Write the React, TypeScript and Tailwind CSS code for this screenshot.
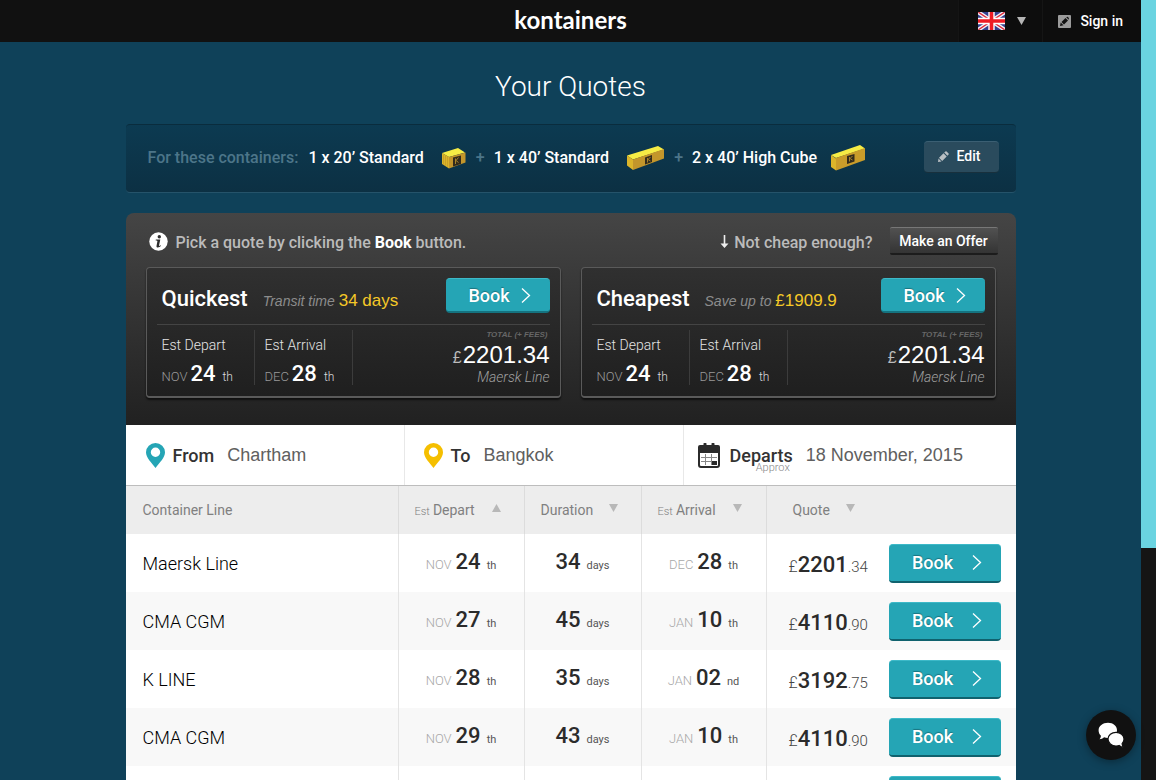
import React from "react";

type Line = {
  name: string;
  depart: [string, string, string];
  days: string;
  arrive: [string, string, string];
  price: [string, string];
};

const lines: Line[] = [
  { name: "Maersk Line", depart: ["NOV", "24", "th"], days: "34", arrive: ["DEC", "28", "th"], price: ["2201", ".34"] },
  { name: "CMA CGM", depart: ["NOV", "27", "th"], days: "45", arrive: ["JAN", "10", "th"], price: ["4110", ".90"] },
  { name: "K LINE", depart: ["NOV", "28", "th"], days: "35", arrive: ["JAN", "02", "nd"], price: ["3192", ".75"] },
  { name: "CMA CGM", depart: ["NOV", "29", "th"], days: "43", arrive: ["JAN", "10", "th"], price: ["4110", ".90"] },
  { name: "Maersk Line", depart: ["DEC", "01", "st"], days: "34", arrive: ["JAN", "04", "th"], price: ["4201", ".34"] },
];

function Chevron() {
  return (
    <svg width="10" height="17" viewBox="0 0 10 17" fill="none" stroke="currentColor" strokeWidth="1.3" aria-hidden="true">
      <path d="M1 1.5 8.5 8.5 1 15.5" />
    </svg>
  );
}

function Flag() {
  return (
    <svg width="27" height="18" viewBox="0 0 27 18" aria-hidden="true">
      <clipPath id="flag-clip">
        <rect width="27" height="18" rx="1" />
      </clipPath>
      <g clipPath="url(#flag-clip)">
        <rect width="27" height="18" fill="#34408f" />
        <path d="M0 0 27 18M27 0 0 18" stroke="#f3f1f5" strokeWidth="4" />
        <path d="M0 0 27 18M27 0 0 18" stroke="#e0283a" strokeWidth="1.4" />
        <path d="M13.5 0V18M0 9H27" stroke="#fff" strokeWidth="6.4" />
        <path d="M13.5 0V18M0 9H27" stroke="#ee1c25" strokeWidth="3.6" />
      </g>
    </svg>
  );
}

function Triangle({ up = false }: { up?: boolean }) {
  return (
    <svg width="9" height="8" viewBox="0 0 9 8" fill="currentColor" aria-hidden="true">
      <path d={up ? "M4.5 0 9 8H0z" : "M0 0H9L4.5 8z"} />
    </svg>
  );
}

function SmallBox() {
  return (
    <svg width="26" height="22" viewBox="0 0 26 22" aria-hidden="true">
      <path d="M1 6 17 1l7 4.500L8 10z" fill="#f6ec45" />
      <path d="M1 6 8 10V21.500L1 17z" fill="#dcb52a" />
      <path d="M8 10 24.500 5.500V15.500L8 21.500z" fill="#c3962b" />
      <path d="M2.500 7.500v10M4.500 8.500v10M6.500 9.500v10" stroke="#b68c22" strokeWidth=".5" />
      <path d="M12 10.500 20 8.500v8.500l-8 2.500z" fill="#332b1c" />
      <path d="M14.500 11.500v5.500M17.500 10.500l-2.500 3 2.500 2" stroke="#a8842b" fill="none" />
    </svg>
  );
}

function LongBox({ tall = false }: { tall?: boolean }) {
  return tall ? (
    <svg width="36" height="27" viewBox="0 0 36 27" aria-hidden="true">
      <path d="M1 11 30 1l5 3.500L6 14z" fill="#f6ec45" />
      <path d="M1 11 6 14.500V26.500L1 23z" fill="#dcb52a" />
      <path d="M6 14 35 4V16L6 26.500z" fill="#c99c2a" />
      <path d="M17 12 24.500 10v7.500L17 20z" fill="#332b1c" />
      <path d="M19.500 13v4.500M22.500 12l-2.500 2.500 2.500 1.500" stroke="#a8842b" fill="none" />
    </svg>
  ) : (
    <svg width="39" height="26" viewBox="0 0 39 26" aria-hidden="true">
      <path d="M1 10.500 32 1l6 3.500L7 14.500z" fill="#f6ec45" />
      <path d="M1 10.500 7 14.500V25L1 20.500z" fill="#dcb52a" />
      <path d="M7 14.500 38 4V13.500L7 25z" fill="#c3962b" />
      <path d="M19 12.500 26 10v7l-7 2.500z" fill="#332b1c" />
      <path d="M21.500 13v4.500M24.500 12l-2.500 2.500 2.500 1.500" stroke="#a8842b" fill="none" />
    </svg>
  );
}

function Pin({ color }: { color: string }) {
  return (
    <svg width="19" height="25" viewBox="0 0 19 25" aria-hidden="true">
      <path fillRule="evenodd" fill={color} d="M9.500 0A9.500 9.300 0 0 1 19 9.300C19 15 13.500 19.500 9.500 25 5.500 19.500 0 15 0 9.300A9.500 9.300 0 0 1 9.500 0zM9.500 4.500a4.700 4.700 0 1 0 0 9.400 4.700 4.700 0 0 0 0-9.400z" />
    </svg>
  );
}

function Calendar() {
  return (
    <svg width="22" height="25" viewBox="0 0 22 25" aria-hidden="true">
      <path fill="#2b2b2b" d="M2 2h3.500V1a1 1 0 0 1 3 0v1h5V1a1 1 0 0 1 3 0v1H20a2 2 0 0 1 2 2v18a3 3 0 0 1-3 3H3a3 3 0 0 1-3-3V4a2 2 0 0 1 2-2z" />
      <path fill="#fff" d="M2 10h18v12a1 1 0 0 1-1 1H3a1 1 0 0 1-1-1z" />
      <path stroke="#888" d="M3 14.500H19M3 18.500H19M7.500 11V22M13.500 11V22" />
      <path fill="#2b2b2b" d="M14 18h5v4h-5z" />
    </svg>
  );
}

function InfoIcon() {
  return (
    <svg width="19" height="19" viewBox="0 0 19 19" aria-hidden="true">
      <circle cx="9.500" cy="9.500" r="9.200" fill="#fff" />
      <circle cx="10.300" cy="4.700" r="1.700" fill="#2e2e2e" />
      <path d="M6.800 7.500h4.500l-1.300 6c-.1.700.5.700 1.500-.2l.5.500c-1.600 2-4.800 2.500-4.500.2l.9-4.800c.1-.6-.3-.8-1.700-.8z" fill="#2e2e2e" />
    </svg>
  );
}

function CardDate({ label, month, day, className }: { label: string; month: string; day: string; className: string }) {
  return (
    <div className={className}>
      <p className="pt-[5px] text-[14px] leading-[20px] font-light text-[#e4e4e4]">{label}</p>
      <p className="mt-[8px] text-[22px] leading-[22px] font-medium text-white">
        <span className="mr-[3px] text-[13px] leading-none font-light text-[#999]">{month}</span>
        {day}
        <span className="ml-[7px] text-[12px] leading-none font-light text-[#ddd]">th</span>
      </p>
    </div>
  );
}

function QuoteCard({ title, note, value }: { title: string; note: string; value: string }) {
  return (
    <section className="flex-1 rounded border border-b-2 border-[#5a5a5a] bg-linear-to-b from-[#303030] to-[#1f1f1f] px-[10px] pt-[10px] pb-[11px] shadow-[0_2px_2px_rgba(0,0,0,0.6)]">
      <div className="flex items-start justify-between border-b border-[#444] pb-[11px] pl-[5px]">
        <div className="flex items-baseline pt-[6px]">
          <h2 className="text-[22px] leading-[29px] font-medium text-white">{title}</h2>
          <p className="ml-[15px] font-['Liberation_Sans',sans-serif] text-[14px] leading-[20px] text-[#8c8c8c] italic">
            {note} <span className="text-[17px] leading-none text-[#f5c827] not-italic">{value}</span>
          </p>
        </div>
        <button className="flex h-[35px] w-[104px] items-center justify-center gap-[11px] rounded border-t border-b-2 border-t-[#3db9c8] border-b-[#157380] bg-[#25a5b5] pl-[4px] text-[18px] font-medium text-white text-shadow-[0_-1px_1px_rgba(0,0,0,0.3)]">
          Book <Chevron />
        </button>
      </div>
      <div className="flex justify-between pt-[5px] pl-[5px]">
        <div className="flex">
          <CardDate label="Est Depart" month="NOV" day="24" className="w-[93px] border-r border-[#3c3c3c]" />
          <CardDate label="Est Arrival" month="DEC" day="28" className="w-[98px] border-r border-[#3c3c3c] pl-[10px]" />
        </div>
        <div className="text-right">
          <p className="pr-[2px] font-['Liberation_Sans',sans-serif] text-[8px] leading-[10px] font-bold text-[#666] italic">TOTAL (+ FEES)</p>
          <p className="font-['Liberation_Sans',sans-serif] text-[24px] leading-[30px] text-white">
            <span className="mr-[1px] text-[16px] leading-none text-[#bbb]">£</span>2201.34
          </p>
          <p className="text-[14px] leading-[14px] font-light text-[#a0a0a0] italic">Maersk Line</p>
        </div>
      </div>
    </section>
  );
}

function DateValue({ value }: { value: [string, string, string] }) {
  return (
    <>
      <span className="text-[13px] font-light text-[#a8a8a8]">{value[0]}</span>{" "}
      <b className="text-[22px] font-medium text-[#2b2b2b]">{value[1]}</b>
      <span className="ml-[6px] text-[11px] text-[#555]">{value[2]}</span>
    </>
  );
}

function SortHeader({ label, prefix, up, className }: { label: string; prefix?: string; up?: boolean; className: string }) {
  return (
    <th scope="col" className="border-l border-[#dcdcdc] p-0 font-normal">
      <button className={className}>
        <span>
          {prefix && <span className="mr-[3px] text-[11px] font-light">{prefix}</span>}
          {label}
        </span>
        <span className="pb-[4px] text-[#b8b8b8]">
          <Triangle up={up} />
        </span>
      </button>
    </th>
  );
}

export default function App() {
  return (
    <div className="flex h-screen bg-[#0f4159] font-[Roboto,sans-serif] antialiased">
      <div className="min-w-0 flex-1 overflow-y-auto [scrollbar-width:none]">
        <header className="grid h-[42px] grid-cols-[1fr_auto_1fr] bg-[#111]">
          <span />
          <a href="#" className="font-[Lato,sans-serif] text-[24px] leading-[39px] font-bold text-white">kontainers</a>
          <div className="flex justify-self-end bg-[#0d0d0d]">
            <button aria-label="Language" className="flex items-center gap-[12px] border-r border-l border-[#151515] pr-[16px] pl-[19px] text-[#b5b5b5]">
              <Flag />
              <Triangle />
            </button>
            <a href="#" className="flex items-center gap-[9px] pr-[18px] pl-[15px] text-[14px] font-medium text-white">
              <svg width="13" height="13" viewBox="0 0 13 13" aria-hidden="true">
                <rect width="13" height="13" rx="1" fill="#9b9b9b" />
                <path d="M2 11 2.700 7.500 5.500 10.300zM3.500 7 7.500 3l2.500 2.500-4 4zM8.200 2.300Q9.200 1.200 10.300 2.200T10.700 4.800z" fill="#111" />
              </svg>
              Sign in
            </a>
          </div>
        </header>

        <main className="mx-auto w-full max-w-[890px]">
          <h1 className="pt-[25px] text-center text-[28px] leading-[40px] font-light text-white">Your Quotes</h1>

          <section className="mt-[17px] flex h-[69px] items-center justify-between rounded border-t border-b border-t-[#0a2c3d] border-b-[#25536a] bg-linear-to-b from-[#0c3a51] to-[#0c3043] pr-[17px] pb-[2px] pl-[22px] text-[16px] font-medium text-white">
            <div className="flex items-center">
              <span className="mr-[10px] text-[#4c7589]">For these containers:</span>
              <span className="mr-[17px]">1 x 20’ Standard</span>
              <SmallBox />
              <span className="mx-[9px] text-[#4c7589]">+</span>
              <span className="mr-[17px]">1 x 40’ Standard</span>
              <LongBox />
              <span className="mx-[9px] text-[#4c7589]">+</span>
              <span className="mr-[13px]">2 x 40’ High Cube</span>
              <LongBox tall />
            </div>
            <button className="mb-[2px] flex h-[32px] w-[75px] items-center justify-center gap-[8px] rounded border-t border-b border-t-[#3b5f73] border-b-[#18303d] bg-[#2a4b5d] pr-[4px] text-[14px] font-medium">
              <svg width="11" height="11" viewBox="0 0 11 11" fill="#b9bfc3" aria-hidden="true">
                <path d="M0 11 .5 7.500 3.500 10.500zM1 6.800 5.500 2.300 8.700 5.500 4.200 10zM6.200 1.600 7.400.4Q8 0 8.600.4L10.600 2.400Q11 3 10.600 3.600L9.400 4.800z" />
              </svg>
              Edit
            </button>
          </section>

          <section className="mt-[20px] rounded-t-lg bg-linear-to-b from-[#454545] to-[#212121] px-[20px] pt-[14px] pb-[27px]">
            <div className="mb-[12px] flex items-center justify-between text-[16px] font-medium text-[#bbb]">
              <p className="flex items-center gap-[8px] pl-[3px]">
                <InfoIcon />
                <span className="pt-[3px]">
                  Pick a quote by clicking the <b className="font-bold text-white">Book</b> button.
                </span>
              </p>
              <div className="-mr-[2px] flex items-center">
                <svg width="9" height="13" viewBox="0 0 9 13" fill="#eee" aria-hidden="true">
                  <path d="M3.700 0h1.600v8.500H8.500L4.500 13 .5 8.500h3.200z" />
                </svg>
                <span className="mr-[17px] ml-[5px] pt-[3px]">Not cheap enough?</span>
                <button className="h-[28px] w-[108px] rounded-xs border-t border-b-2 border-t-[#777] border-b-[#1c1c1c] bg-linear-to-b from-[#515151] to-[#343434] pt-[1px] text-[14px] font-medium text-white">
                  Make an Offer
                </button>
              </div>
            </div>
            <div className="flex gap-[20px]">
              <QuoteCard title="Quickest" note="Transit time" value="34 days" />
              <QuoteCard title="Cheapest" note="Save up to" value="£1909.9" />
            </div>
          </section>

          <section className="flex h-[61px] items-center border-b border-[#bdbdbd] bg-white text-[18px] text-[#333]">
            <div className="flex h-full w-[278px] items-center pl-[20px]">
              <Pin color="#25a5b5" />
              <strong className="ml-[8px] font-medium">From</strong>
              <span className="ml-[13px] font-['Liberation_Sans',sans-serif] text-[#606060]">Chartham</span>
            </div>
            <div className="flex h-full w-[279px] items-center border-l border-[#e8e8e8] pl-[19px]">
              <Pin color="#f5bf00" />
              <strong className="ml-[8px] font-medium">To</strong>
              <span className="ml-[13px] font-['Liberation_Sans',sans-serif] text-[#606060]">Bangkok</span>
            </div>
            <div className="flex h-full flex-1 items-center border-l border-[#e8e8e8] pl-[14px]">
              <Calendar />
              <strong className="relative ml-[10px] font-medium">
                Departs
                <span className="absolute right-[3px] bottom-[-5px] text-[11px] leading-[12px] font-light text-[#888]">Approx</span>
              </strong>
              <span className="ml-[13px] font-['Liberation_Sans',sans-serif] text-[#606060]">18 November, 2015</span>
            </div>
          </section>

          <table className="w-full table-fixed border-separate border-spacing-0 bg-white">
            <colgroup>
              <col className="w-[272px]" />
              <col className="w-[126px]" />
              <col className="w-[117px]" />
              <col className="w-[125px]" />
              <col />
            </colgroup>
            <thead>
              <tr className="h-[48px] bg-[#ededed] text-left text-[14px] text-[#808080]">
                <th scope="col" className="p-0 pl-[17px] font-normal">Container Line</th>
                <SortHeader prefix="Est" label="Depart" up className="flex items-center gap-[17px] pl-[16px]" />
                <SortHeader label="Duration" className="flex items-center gap-[16px] pl-[16px]" />
                <SortHeader prefix="Est" label="Arrival" className="flex items-center gap-[17px] pl-[16px]" />
                <SortHeader label="Quote" className="flex items-center gap-[16px] pl-[26px]" />
              </tr>
            </thead>
            <tbody>
              {lines.map((line, i) => (
                <tr key={i} className="h-[58px] text-[#444] even:bg-[#f8f8f8]">
                  <td className="p-0 pl-[17px] text-[18px] font-light text-black">{line.name}</td>
                  <td className="border-l border-[#e4e4e4] p-0 pb-[4px] text-center">
                    <DateValue value={line.depart} />
                  </td>
                  <td className="border-l border-[#e4e4e4] p-0 pb-[4px] text-center">
                    <b className="text-[22px] font-medium text-[#2b2b2b]">{line.days}</b>
                    <span className="ml-[6px] text-[11px] text-[#555]">days</span>
                  </td>
                  <td className="border-l border-[#e4e4e4] p-0 pb-[4px] text-center">
                    <DateValue value={line.arrive} />
                  </td>
                  <td className="border-l border-[#e4e4e4] p-0 pr-[15px] pl-[22px]">
                    <div className="flex items-center justify-between">
                      <span className="pt-[2px]">
                        <span className="text-[16px] font-light">£</span>
                        <b className="text-[22px] font-medium text-[#2b2b2b]">{line.price[0]}</b>
                        <span className="text-[15px] font-light">{line.price[1]}</span>
                      </span>
                      <button className="flex h-[39px] w-[112px] items-center justify-center gap-[19px] rounded border-t border-b-2 border-t-[#3db9c8] border-b-[#10626e] bg-[#25a5b5] pl-[5px] text-[18px] font-medium text-white text-shadow-[0_-1px_1px_rgba(0,0,0,0.3)]">
                        Book <Chevron />
                      </button>
                    </div>
                  </td>
                </tr>
              ))}
            </tbody>
          </table>
        </main>
      </div>

      <div className="w-[15px] bg-[#151515]" aria-hidden="true">
        <div className="h-[548px] bg-[#6ad4e1]" />
      </div>

      <button
        aria-label="Chat"
        className="fixed right-[20px] bottom-[20px] flex size-[50px] items-center justify-center rounded-full bg-[#111] shadow-[0_2px_8px_rgba(0,0,0,0.35)]"
      >
        <svg width="26" height="26" viewBox="0 0 26 26" fill="#fff" aria-hidden="true">
          <path d="M10 .8C15.200.8 19 4 19 8.300S15.200 16 10 16c-1.400 0-2.800-.2-3.900-.7-1.200 1.300-2.900 2-4.600 2 1-1 1.500-2.300 1.300-3.800C1.300 12.200.6 10.400.6 8.300.6 4 4.800.8 10 .8z" />
          <path d="M18 10.300c4.400 0 8 3 8 6.800 0 1.900-.7 3.400-1.900 4.600 0 1.400.6 2.600 1.600 3.600-1.900 0-3.500-.7-4.600-1.800-1 .4-2 .5-3.100.5-4.400 0-8-3-8-6.900s3.600-6.800 8-6.800z" stroke="#111" strokeWidth="1.200" />
        </svg>
      </button>
    </div>
  );
}
